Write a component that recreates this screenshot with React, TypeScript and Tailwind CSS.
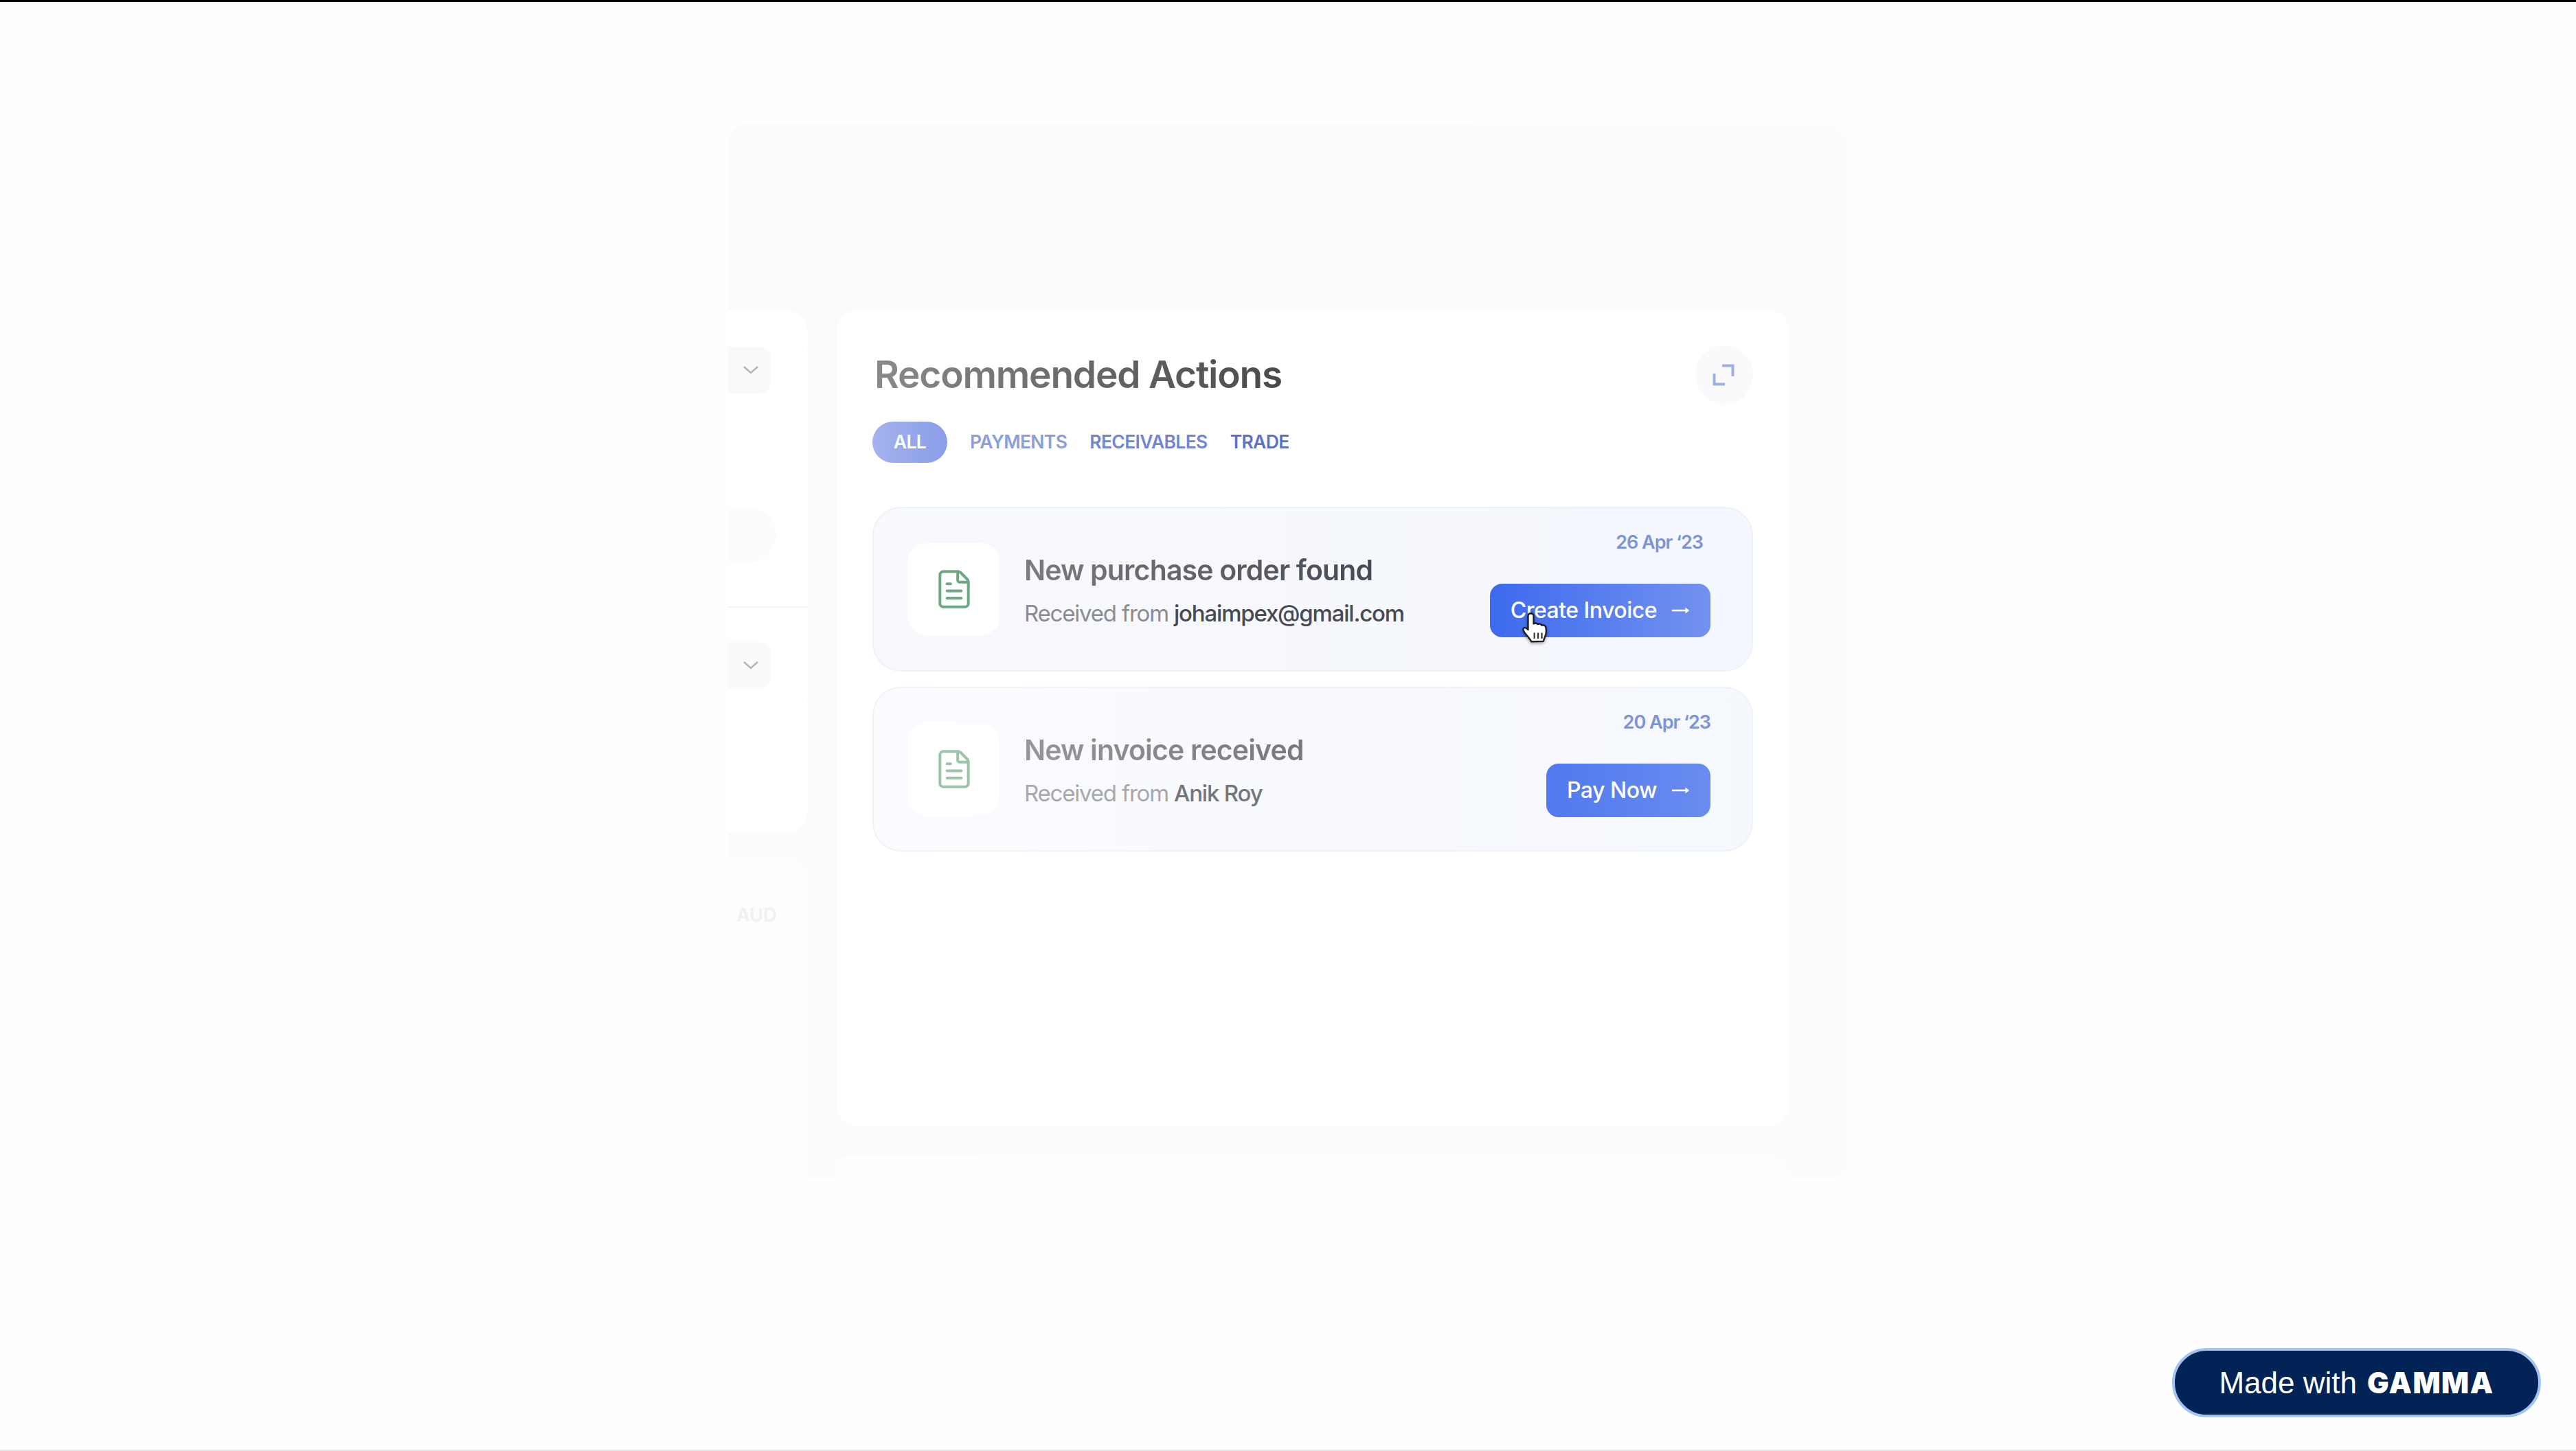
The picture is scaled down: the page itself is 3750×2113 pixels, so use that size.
import { FileText } from "lucide-react";

const font = { fontFamily: '"Inter", "Liberation Sans", sans-serif' };

function Arrow() {
  return (
    <svg width="26" height="14" viewBox="0 0 26 14" fill="none" className="shrink-0">
      <path d="M0 7H24" stroke="white" strokeWidth="2.6" />
      <path d="M19.5 2.5L25 7L19.5 11.5Z" fill="white" />
    </svg>
  );
}

function Chevron() {
  return (
    <svg width="24" height="16" viewBox="0 0 24 16" fill="none">
      <path d="M2 3L12 12L22 3" stroke="#b3b3b3" strokeWidth="2.4" />
    </svg>
  );
}

function HandCursor() {
  return (
    <svg
      width="48"
      height="52"
      viewBox="0 0 44 48"
      className="absolute left-[45px] top-[40px] drop-shadow-[0_2px_2px_rgba(0,0,0,0.35)]"
    >
      <path
        d="M13 3c2.6 0 4 1.8 4 4v10c1.500-1.300 4.500-1.200 5.500.6 1.700-1 4.500-.6 5.300 1.400 1.800-.8 5 0 5.500 2.500 1 4.500.7 9.500-1.300 13.500l-2 5.500-16 .5c-2-4-6-8-9-12-1.500-2-3.200-5-1-6.500 2-1.200 4 .5 5.500 2.500V7c0-2.200 1-4 3.500-4z"
        fill="white"
        stroke="#1c1c1c"
        strokeWidth="2.200"
        strokeLinejoin="round"
      />
      <path d="M18 29v8M23 29v8M28 29v8" stroke="#333" strokeWidth="2" />
    </svg>
  );
}

interface ActionProps {
  title: string;
  from: string;
  date: string;
  action: string;
  cardBg: string;
  titleClass: string;
  fromClass: string;
  nameClass: string;
  iconClass: string;
  buttonClass: string;
  dateClass: string;
  cursor?: boolean;
}

function ActionCard(p: ActionProps) {
  return (
    <div className={`flex h-[240px] items-stretch rounded-[42px] border-2 border-[#eef2f9] pl-[50px] pr-[60px] ${p.cardBg}`}>
      <div className="flex h-[134px] w-[133px] shrink-0 items-center justify-center self-center rounded-[26px] bg-white">
        <FileText size={62} strokeWidth={1.55} className={p.iconClass} />
      </div>
      <div className="ml-[36px] flex flex-col pt-[59px]">
        <div className={`text-[41px] font-semibold leading-[62px] tracking-[-0.85px] ${p.titleClass}`}>
          {p.title}
        </div>
        <div className="mt-[9px] text-[33px] leading-[46px] tracking-[-1.2px]">
          <span className={p.fromClass}>Received from </span>
          <span className={`font-medium ${p.nameClass}`}>{p.from}</span>
        </div>
      </div>
      <div className="ml-auto flex flex-col items-end pt-[32px]">
        <div className={`text-[27px] font-semibold leading-[36px] tracking-[-1px] text-[#7c93d6] ${p.dateClass}`}>
          {p.date}
        </div>
        <button
          className={`relative mt-[42px] flex h-[78px] items-center rounded-[18px] pl-[30px] pr-[30px] text-[32px] font-medium tracking-[-0.5px] text-white ${p.buttonClass}`}
        >
          <span>{p.action}</span>
          <span className="ml-[22px]">
            <Arrow />
          </span>
          {p.cursor && <HandCursor />}
        </button>
      </div>
    </div>
  );
}

export default function App() {
  return (
    <div className="flex h-[2113px] w-[3750px] flex-col overflow-hidden bg-[#fefefe]" style={font}>
      <div className="h-[3px] shrink-0 bg-black" />
      <div className="relative min-h-0 flex-1">
        <div className="ml-[1060px] mt-[179px] flex h-[1533px] w-[1630px] gap-[43px] overflow-hidden rounded-[26px] bg-linear-to-r from-[#fbfbfb] to-[#fcfcfc] pr-[86px]">
          {/* left column, mostly cut off in the fade */}
          <div className="flex w-[115px] shrink-0 flex-col pt-[270px]">
            <div className="h-[761px] shrink-0 rounded-r-[30px] bg-white">
              <div className="ml-0 mt-[53px] flex h-[68px] w-[62px] items-center justify-end rounded-r-[16px] bg-[#f9f9f9] pr-[17px]">
                <Chevron />
              </div>
              <div className="mt-[166px] h-[80px] w-[70px] rounded-r-full bg-[#fcfcfc]" />
              <div className="mt-[64px] h-[2px] bg-[#f5f5f5]" />
              <div className="mt-[50px] flex h-[68px] w-[62px] items-center justify-end rounded-r-[16px] bg-[#fafafa] pr-[17px]">
                <Chevron />
              </div>
            </div>
            <div className="mt-[33px] flex-1 rounded-tr-[30px] bg-[#fdfdfd] pl-[12px] pt-[70px] text-[27px] font-semibold leading-[34px] text-[#f1f1f3]">
              AUD
            </div>
          </div>

          {/* right column */}
          <div className="flex min-w-0 flex-1 flex-col">
            <div className="mt-[270px] h-[1188px] shrink-0 rounded-[30px] bg-white px-[52px]">
              <div className="flex items-center justify-between pt-[50px]">
                <h1 className="bg-linear-to-r from-[#8a8a8a] to-[#4a4a4a] bg-clip-text pl-[3px] text-[55px] font-semibold leading-[87px] tracking-[-1.2px] text-transparent">
                  Recommended Actions
                </h1>
                <div className="flex h-[86px] w-[84px] items-center justify-center rounded-full bg-[#fafafc] pr-[3px]">
                  <svg width="32" height="32" viewBox="0 0 32 32" fill="none">
                    <path d="M14 2.500H29.500V18" stroke="#9db0e6" strokeWidth="4" />
                    <path d="M18 29.500H2.500V14" stroke="#9db0e6" strokeWidth="4" />
                  </svg>
                </div>
              </div>
              <div className="mt-[25px] flex h-[60px] items-center text-[26.500px] font-semibold tracking-[-0.65px]">
                <div className="flex h-[60px] w-[109px] items-center justify-center rounded-full bg-linear-to-r from-[#a3b3ee] to-[#8a9de8] text-white">
                  ALL
                </div>
                <span className="ml-[33px] text-[#8b9ddb]">PAYMENTS</span>
                <span className="ml-[33px] text-[#6f86d4]">RECEIVABLES</span>
                <span className="ml-[33px] text-[#5a73c9]">TRADE</span>
              </div>
              <div className="mt-[64px] flex flex-col gap-[22px]">
                <ActionCard
                  title="New purchase order found"
                  from="johaimpex@gmail.com"
                  date="26 Apr ‘23"
                  action="Create Invoice"
                  cardBg="bg-linear-to-r from-[#f8f9fd] to-[#f4f7fd]"
                  titleClass="bg-linear-to-r from-[#7a7c80] to-[#44454d] bg-clip-text text-transparent"
                  fromClass="text-[#8a8c90]"
                  nameClass="text-[#484a50]"
                  iconClass="text-[#6ea882]"
                  buttonClass="bg-linear-to-r from-[#3d69ee] to-[#7391ef]"
                  dateClass="mr-[11px]"
                  cursor
                />
                <ActionCard
                  title="New invoice received"
                  from="Anik Roy"
                  date="20 Apr ‘23"
                  action="Pay Now"
                  cardBg="bg-linear-to-r from-[#fbfbfe] to-[#f5f8fd]"
                  titleClass="bg-linear-to-r from-[#95979b] to-[#76787d] bg-clip-text text-transparent"
                  fromClass="text-[#a6a8ac]"
                  nameClass="text-[#737579]"
                  iconClass="text-[#9dc4aa]"
                  buttonClass="bg-linear-to-r from-[#4f79ee] to-[#6a8cf0]"
                  dateClass=""
                />
              </div>
            </div>
            <div className="mt-[43px] flex-1 rounded-tr-[30px] bg-[#fdfdfd]" />
          </div>
        </div>

        {/* Gamma badge */}
        <div className="absolute left-[3162px] top-[1960px] flex h-[101px] w-[537px] items-center justify-center rounded-full border-4 border-[#a4c4ee] bg-[#012356] text-white">
          <span className="text-[44px] leading-none" style={{ fontFamily: '"Liberation Sans", sans-serif' }}>
            Made with
          </span>
          <span className="ml-[15px] text-[42px] font-black leading-none tracking-[1.5px]">GAMMA</span>
        </div>
      </div>
      <div className="h-[2px] shrink-0 bg-[#e6e6e6]" />
    </div>
  );
}
